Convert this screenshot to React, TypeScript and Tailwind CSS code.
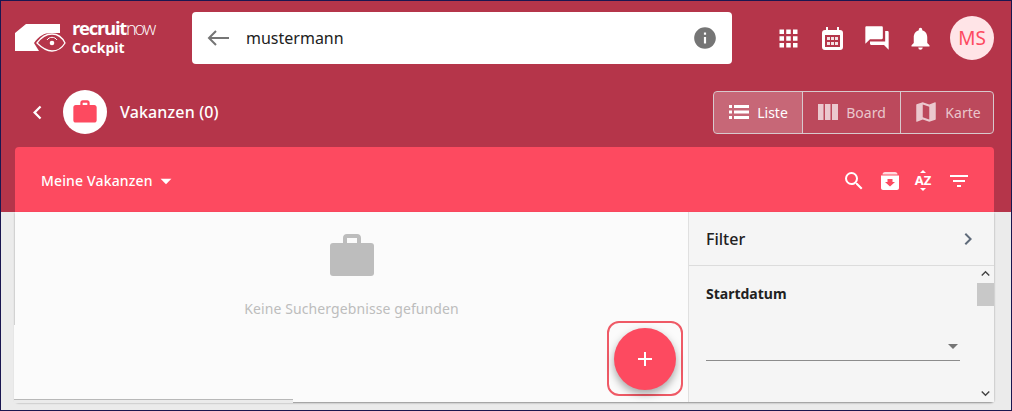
import { MdApps, MdChevronLeft, MdChevronRight, MdForum, MdInfo, MdKeyboardArrowDown, MdKeyboardArrowUp, MdMap, MdNotifications, MdSearch, MdWork, MdAdd, MdArrowDropDown, MdFilterList } from 'react-icons/md';

const Logo = () => (
  <div className="flex items-center">
    <svg width="52" height="30" viewBox="0 0 52 30" className="shrink-0">
      <path d="M0 10 L11 1 H45 V10 H36 C29 10 24 13 19 20 L24 28 H0 Z" fill="white" />
      <path d="M22 20 C27 13 32 11 37 11 C42 11 47 14 50 20 C47 25 42 28 37 28 C32 28 27 25 22 20 Z" fill="none" stroke="white" strokeWidth="1.3" />
      <path d="M32 17 A6 6 0 0 1 42 17" fill="none" stroke="white" strokeWidth="1" />
      <circle cx="37" cy="20" r="2.3" fill="white" />
    </svg>
    <div className="ml-[5px] flex flex-col text-white font-['Open_Sans',sans-serif]">
      <div className="h-[20px] text-[18.5px] leading-[20px] tracking-[-1.3px] font-bold">
        recruit<span className="text-[18px] font-light tracking-[-2px]">now</span>
      </div>
      <div className="h-[20px] text-[14px] leading-[20px] font-bold">Cockpit</div>
    </div>
  </div>
);

const BackArrow = () => (
  <svg width="22" height="16" viewBox="0 0 22 16" fill="none" stroke="#757575" strokeWidth="2" className="shrink-0">
    <path d="M22 8 H2 M9 1 L2 8 L9 15" />
  </svg>
);

const CalendarIcon = () => (
  <svg width="21" height="23" viewBox="0 0 21 23" className="shrink-0">
    <path d="M4 0 H6 V3 H15 V0 H17 V3 H18 C20 3 21 4 21 6 V20 C21 22 20 23 18 23 H3 C1 23 0 22 0 20 V6 C0 4 1 3 3 3 H4 Z" fill="white" />
    <rect x="3" y="8" width="15" height="12" fill="#b5354a" />
    <path d="M5 10 H8 V13 H5 Z M9 10 H12 V13 H9 Z M13 10 H16 V13 H13 Z M5 15 H8 V18 H5 Z M9 15 H12 V18 H9 Z M13 15 H16 V18 H13 Z" fill="white" opacity="0.85" />
  </svg>
);

const ListIcon = () => (
  <svg width="20" height="14" viewBox="0 0 20 14" fill="currentColor">
    <path d="M0 0 H3 V3 H0 Z M5 0 H20 V3 H5 Z M0 5.5 H3 V8.5 H0 Z M5 5.5 H20 V8.5 H5 Z M0 11 H3 V14 H0 Z M5 11 H20 V14 H5 Z" />
  </svg>
);

const BoardIcon = () => (
  <svg width="20" height="16" viewBox="0 0 20 16" fill="currentColor">
    <path d="M0 0 H5.5 V16 H0 Z M7 0 H12.5 V16 H7 Z M14 0 H20 V16 H14 Z" />
  </svg>
);

const Briefcase = ({ className }: { className?: string }) => (
  <svg width="44" height="42" viewBox="0 0 44 42" fill="currentColor" className={className}>
    <path d="M13 9 V4 C13 1.5 14.5 0 17 0 H27 C29.5 0 31 1.5 31 4 V9 H27 V4 H17 V9 Z" />
    <path d="M3 9 H41 C43 9 44 10 44 12 V39 C44 41 43 42 41 42 H3 C1 42 0 41 0 39 V12 C0 10 1 9 3 9 Z" />
  </svg>
);

const ArchiveIcon = () => (
  <svg width="18" height="18" viewBox="0 0 18 18">
    <path d="M1.5 2.5 C1.5 1 2.5 0 4 0 H14 C15.5 0 16.5 1 16.5 2.5 Z" fill="white" opacity="0.8" />
    <path d="M0 3.5 H18 V16 C18 17 17 18 16 18 H2 C1 18 0 17 0 16 Z" fill="white" />
    <path d="M6.5 7 H11.5 V10 H14 L9 14.5 L4 10 H6.5 Z" fill="#fd4a60" />
  </svg>
);

const SortIcon = () => (
  <div className="flex h-[22px] w-[18px] flex-col items-center justify-center">
    <span className="h-0 w-0 border-x-[3px] border-b-[3px] border-x-transparent border-b-white" />
    <span className="text-[13px] font-bold leading-[15px] text-white">AZ</span>
    <span className="h-0 w-0 border-x-[3px] border-t-[3px] border-x-transparent border-t-white" />
  </div>
);

export default function App() {
  return (
    <div className="flex h-[411px] w-[1012px] flex-col overflow-hidden border-x border-y border-[#1a1650] bg-[#ebebeb] font-['Noto_Sans',sans-serif]">
      <div className="flex h-[211px] shrink-0 flex-col bg-[#b5354a]">
        {/* top bar */}
        <div className="flex h-[63px] shrink-0 items-end pl-[14px] pr-[17px]">
          <div className="flex h-[52px] w-[177px] items-center">
            <Logo />
          </div>
          <div className="flex h-[52px] w-[540px] items-center rounded-[4px] bg-white pl-[15px] pr-[14px]">
            <BackArrow />
            <span className="ml-[17px] flex-1 text-[16px] text-[#212121]">mustermann</span>
            <MdInfo size={26} className="text-[#757575]" />
          </div>
          <div className="ml-[43px] flex h-[52px] flex-1 items-center">
            <MdApps size={27} className="text-white" />
            <div className="ml-[20px]">
              <CalendarIcon />
            </div>
            <MdForum size={28} className="ml-[20px] text-white" />
            <MdNotifications size={27} className="ml-[16px] text-white" />
            <div className="ml-auto flex h-[44px] w-[44px] items-center justify-center rounded-full bg-[#ffe4e7] text-[19px] text-[#fd4a60]">MS</div>
          </div>
        </div>
        {/* title row */}
        <div className="flex h-[83px] shrink-0 items-center pl-[23px] pr-[17px] pt-[13px]">
          <MdChevronLeft size={27} className="text-white" />
          <div className="ml-[12px] flex h-[44px] w-[44px] items-center justify-center rounded-full bg-white">
            <MdWork size={28} className="text-[#fd4a60]" />
          </div>
          <span className="ml-[13px] flex-1 text-[16px] font-medium tracking-[0.15px] text-white">Vakanzen (0)</span>
          <div className="flex h-[43px] overflow-hidden rounded-[4px] border border-[#d8c9cd] text-[14px]">
            <div className="flex w-[88px] items-center justify-center gap-[8px] pl-[1px] bg-white/25 text-white">
              <ListIcon />
              <span>Liste</span>
            </div>
            <div className="flex w-[98px] items-center justify-center gap-[8px] pl-[1px] border-l border-[#d8c9cd] bg-white/10 text-white/70">
              <BoardIcon />
              <span>Board</span>
            </div>
            <div className="flex w-[93px] items-center justify-center gap-[6px] border-l border-[#d8c9cd] bg-white/10 text-white/70">
              <MdMap size={26} />
              <span>Karte</span>
            </div>
          </div>
        </div>
        {/* card header */}
        <div className="ml-[14px] mr-[17px] flex flex-1 items-center rounded-t-[4px] bg-[#fd4a60] pl-[26px] pr-[23px] pt-[2px]">
          <span className="text-[14px] font-medium tracking-[0.15px] text-white">Meine Vakanzen</span>
          <MdArrowDropDown size={26} className="text-white" />
          <div className="ml-auto flex items-center">
            <MdSearch size={24} className="text-white" />
            <div className="ml-[15px]">
              <ArchiveIcon />
            </div>
            <div className="ml-[15px]">
              <SortIcon />
            </div>
            <MdFilterList size={24} className="ml-[15px] text-white" />
          </div>
        </div>
      </div>

      {/* card body */}
      <div className="ml-[14px] mr-[17px] flex h-[190px] shrink-0 rounded-b-[4px] shadow-[0_1px_2px_rgba(0,0,0,0.4)]">
        <div className="relative flex h-full w-[673px] flex-col items-center bg-[#fbfbfb]">
          <Briefcase className="mt-[22px] text-[#bdbdbd]" />
          <span className="mt-[22px] text-[14px] tracking-[0.1px] text-[#bdbdbd]">Keine Suchergebnisse gefunden</span>
          <div className="absolute bottom-[-1px] left-[-1px] flex h-[78px] w-[279px] flex-col">
            <div className="h-[75px] border-b border-[#b8b8b8] bg-[#fbfbfb]" />
            <div className="flex-1 bg-[#ebebeb]" />
          </div>
          <div className="absolute left-[592px] top-[109px] flex h-[75px] w-[76px] items-center justify-center rounded-[12px] border-2 border-[#ef5a66]">
            <div className="flex h-[62px] w-[62px] shrink-0 items-center justify-center rounded-full bg-[#fd4a60] text-white shadow-[0_4px_8px_rgba(0,0,0,0.35)]">
              <MdAdd size={24} />
            </div>
          </div>
        </div>
        <div className="flex flex-1 flex-col border-l border-[#e0e0e0] bg-[#f5f5f5]">
          <div className="flex h-[54px] shrink-0 items-center justify-between border-b border-[#dcdcdc] pl-[17px] pr-[14px] pt-[1px]">
            <span className="text-[16px] font-medium text-[#212121]">Filter</span>
            <MdChevronRight size={24} className="text-[#5f6b7a]" />
          </div>
          <div className="flex min-h-0 flex-1">
            <div className="flex-1 pl-[17px] pr-[17px]">
              <div className="mt-[17px] text-[14px] font-bold leading-[22px] text-[#212121]">Startdatum</div>
              <div className="mt-[26px] flex h-[30px] items-center justify-end border-b border-[#8c8c8c]">
                <MdArrowDropDown size={24} className="-mr-[5px] mt-[1px] text-[#757575]" />
              </div>
            </div>
            <div className="flex w-[17px] flex-col justify-between">
              <div>
                <MdKeyboardArrowUp size={17} className="-mt-[1px] text-[#444]" />
                <div className="mt-[1px] h-[23px] bg-[#c8c8c8]" />
              </div>
              <MdKeyboardArrowDown size={17} className="text-[#444]" />
            </div>
          </div>
        </div>
      </div>
    </div>
  );
}
